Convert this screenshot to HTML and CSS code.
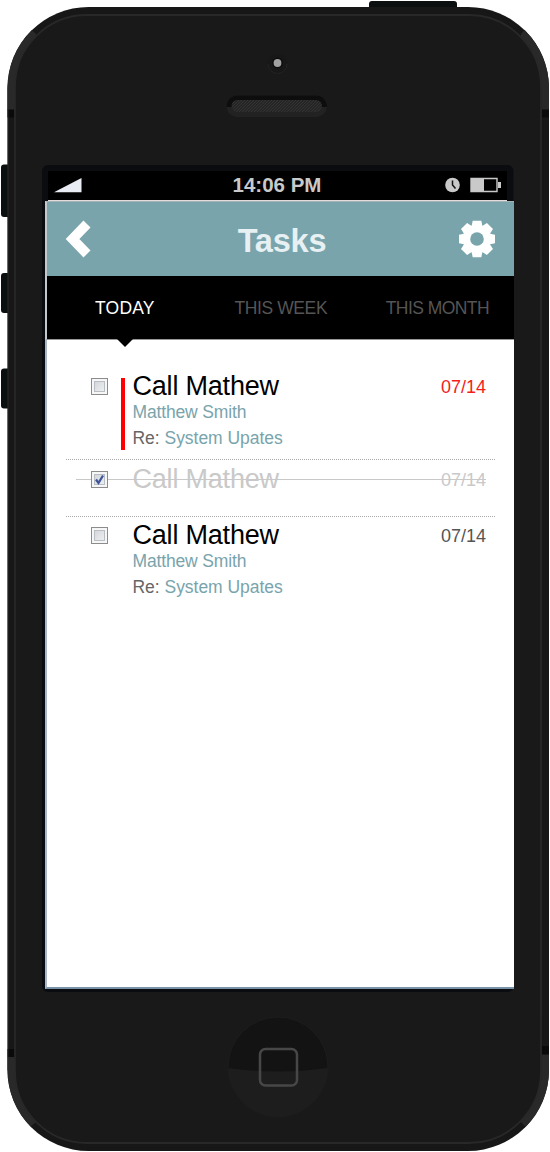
FILE: index.html
```html
<!DOCTYPE html>
<html lang="en">
<head>
<meta charset="utf-8">
<title>Tasks</title>
<link rel="stylesheet" href="styles.css">
</head>
<body>
<div class="phone">
  <svg class="case" width="550" height="1152" viewBox="0 0 550 1152" aria-hidden="true">
    <defs>
      <clipPath id="shell"><rect x="7.5" y="7" width="541.5" height="1144" rx="81"/></clipPath>
      <clipPath id="home"><circle cx="278" cy="1067" r="50"/></clipPath>
      <pattern id="mesh" width="3" height="3" patternUnits="userSpaceOnUse"><rect width="3" height="3" fill="#252525"/><path d="M0 3 3 0" stroke="#343434"/></pattern>
    </defs>
    <g fill="#0b0f0f">
      <rect x="369" y="1" width="88" height="14" rx="3"/>
      <rect x="1" y="164.500" width="16" height="52.500" rx="3"/>
      <rect x="1" y="273" width="16" height="40" rx="3"/>
      <rect x="1" y="368.500" width="16" height="40" rx="3"/>
    </g>
    <g clip-path="url(#shell)">
      <rect width="550" height="1152" fill="#171717"/>
      <path fill="#292929" d="M0 0 36 34 V110H0ZM550 0 521 34 V110H550ZM0 1152 36 1122V1057H0ZM550 1152 521 1122V1055H550Z"/>
      <path fill="#0a0a0a" d="M7 109.500h10v8H7zM540 109.500h10v8H540zM7 1049h10v8H7zM540 1046h10v8H540z"/>
      <rect x="15" y="15" width="526" height="1128" rx="72" fill="#191919" stroke="#282828" stroke-width="1.800"/>
      <path fill="none" stroke="#303030" d="M7.800 85V1070"/>
    </g>
    <circle cx="277.500" cy="64" r="9.800" fill="#171717"/>
    <path d="M268 64a9.500 9.500 0 0 0 19 0" fill="none" stroke="#242424"/>
    <circle cx="277.500" cy="63" r="5.400" fill="#0d0d0d"/>
    <circle cx="277.500" cy="63" r="3.900" fill="#a0a0a0"/>
    <rect x="226.500" y="95.500" width="100.500" height="21.500" rx="10.700" fill="#222"/>
    <path d="M226.500 107a10.700 11.500 0 0 1 10.700-11.500h79a10.700 11.500 0 0 1 10.800 11.500z" fill="#0d0d0d"/>
    <rect x="231.500" y="100" width="90.500" height="12" rx="6" fill="url(#mesh)"/>
    <rect x="42" y="165" width="471.500" height="827" rx="6" fill="#0b0c10"/>
    <g clip-path="url(#home)">
      <rect x="228" y="1017" width="100" height="100" fill="#131313"/>
      <path d="M228 1068q50 7 100 0v50H228z" fill="#1d1d1d"/>
    </g>
    <circle cx="278" cy="1067" r="50" fill="none" stroke="#1d1d1d"/>
    <rect x="260" y="1049" width="37" height="36.500" rx="5.500" fill="none" stroke="#474747" stroke-width="2.500"/>
  </svg>

  <main class="screen">
    <div class="statusbar">
      <svg class="signal" width="28" height="15" viewBox="0 0 28 15"><path d="M0 14.300 27.500 0V14.300z" fill="#e9edf3"/></svg>
      <span class="clock">14:06 PM</span>
      <svg class="indicators" width="58" height="16" viewBox="0 0 58 16">
        <circle cx="7.500" cy="8" r="7.300" fill="#c9c9c9"/>
        <path d="M7.500 3.500V8l3 3.500" fill="none" stroke="#111" stroke-width="1.500"/>
        <path d="M26 1.500h26v13H26z" fill="none" stroke="#c9c9c9" stroke-width="1.400"/>
        <path d="M26 1.500h13v13H26zM53 5h3v6h-3z" fill="#c9c9c9"/>
      </svg>
    </div>
    <header class="titlebar">
      <svg class="back" width="26" height="38" viewBox="0 0 26 38"><path d="M22 4 7.500 19l14.500 15" fill="none" stroke="#fff" stroke-width="9.800"/></svg>
      <h1 class="title">Tasks</h1>
      <svg class="gear" width="36" height="38" viewBox="-18 -19 36 38">
        <g fill="#fff">
          <path id="tooth" d="M-5.600-12-4.300-18.300H4.300L5.600-12V12L4.300 18.300H-4.300L-5.600 12z"/>
          <use href="#tooth" transform="rotate(45)"/><use href="#tooth" transform="rotate(90)"/><use href="#tooth" transform="rotate(135)"/>
          <circle r="14.300"/>
        </g>
        <circle r="6.800" fill="#79a4ac"/>
      </svg>
    </header>
    <nav class="tabs">
      <span class="tab active">TODAY</span>
      <span class="tab week">THIS WEEK</span>
      <span class="tab month">THIS MONTH</span>
    </nav>
    <ul class="tasks">
      <li class="task urgent">
        <span class="check"></span>
        <div class="info"><h2 class="name">Call Mathew</h2><p class="person">Matthew Smith</p><p class="subject">Re: <span class="topic">System Upates</span></p></div>
        <span class="date">07/14</span>
      </li>
      <li class="task done">
        <span class="check"><svg width="17" height="17" viewBox="0 0 17 17"><path d="M5 8.500 7.500 12 12 4.500" fill="none" stroke="#40559c" stroke-width="2.300"/></svg></span>
        <div class="info"><h2 class="name">Call Mathew</h2></div>
        <span class="date">07/14</span>
      </li>
      <li class="task">
        <span class="check"></span>
        <div class="info"><h2 class="name">Call Mathew</h2><p class="person">Matthew Smith</p><p class="subject">Re: <span class="topic">System Upates</span></p></div>
        <span class="date">07/14</span>
      </li>
    </ul>
  </main>
</div>
</body>
</html>
```

FILE: styles.css
```css
* { box-sizing: border-box; }
body { margin: 0; background: #fff; font-family: "Liberation Sans", Arial, sans-serif; }
h1, h2, p, ul { margin: 0; padding: 0; font-weight: normal; }
svg { display: block; flex: none; }

.phone { position: relative; width: 550px; height: 1152px; padding: 171px 36px 163px 45px; overflow: hidden; }
.case { position: absolute; top: 0; left: 0; }
.screen { position: relative; display: flex; flex-direction: column; height: 818px; }

.statusbar { display: flex; align-items: center; height: 30px; margin: 0 7px 0 3px; padding: 0 6px 0 7px; background: #000; border-bottom: 1px solid #e4dddd; }
.signal { margin-bottom: 1px; margin-left: -1px; }
.clock { margin-left: 150.500px; margin-bottom: 2px; color: #c9c9c9; font-size: 20.500px; font-weight: bold; line-height: 28px; white-space: nowrap; }
.indicators { margin-left: auto; margin-right: -1.500px; margin-bottom: 1px; }

.titlebar { display: flex; align-items: center; height: 75px; padding: 0 19px 0 18px; background: #79a4ac; border-left: 2px solid #c4c8ce; border-top: 1px solid #a5b1b4; }
.title { flex: 1; padding: 4px 0 0 14px; color: #e7f0f2; font-size: 32.500px; letter-spacing: -.2px; font-weight: bold; line-height: 38px; text-align: center; }

.tabs { display: flex; align-items: center; height: 63.500px; padding: 2px 0 0 48px; background: #000; border-left: 2px solid #c4c8ce; border-bottom: 1px solid #999; color: #555; font-size: 17.500px; letter-spacing: -.4px; }
.tab { position: relative; white-space: nowrap; }
.active { width: 61px; color: #fff; letter-spacing: .2px; }
.active::after { content: ""; position: absolute; top: 39px; left: 20px; border: 10px solid transparent; border-top-color: #000; border-bottom: 0; }
.week { margin-left: 78.500px; }
.month { margin-left: 58.500px; letter-spacing: -.55px; }

.tasks { flex: 1; list-style: none; padding: 28px 19px 0 19px; background: #fff; border-left: 2px solid #a9b6c7; border-bottom: 2px solid #7892a8; }
.task { position: relative; display: flex; align-items: flex-start; height: 57px; padding: 3px 9px 0 25px; border-bottom: 1px dotted #aaa; }
.urgent { height: 92px; }
.task:last-child { height: 92px; border-bottom: 0; }
.check { width: 17px; height: 17px; margin-top: 7px; border: 1px solid #8c8c8c; background: linear-gradient(135deg, #cbcfd5, #f6f6f6); box-shadow: inset 0 0 0 2px #f6f6f6, inset 0 0 0 3px #b9bdc4; }
.check svg { margin: -1px; }
.info { flex: 1; margin-left: 24.500px; }
.name { color: #000; font-size: 27px; line-height: 31px; letter-spacing: -.2px; }
.person, .subject { color: #79a4ac; font-size: 17.500px; line-height: 20px; letter-spacing: -.15px; }
.subject { margin-top: 6px; color: #666; letter-spacing: -.03px; }
.topic { color: #79a4ac; }
.date { margin-top: 6px; color: #555; font-size: 18px; line-height: 21px; }
.urgent .date { color: #f51c1c; }
.urgent::before { content: ""; position: absolute; top: 10px; left: 55px; width: 4px; height: 72px; background: #f00; }
.done .name, .done .date { color: #c9c9c9; }
.done { padding-top: 4px; }
.done::before { content: ""; position: absolute; top: 19px; left: 10px; right: 9px; height: 1px; background: #c8c8c8; }
.done .check { position: relative; }
```
